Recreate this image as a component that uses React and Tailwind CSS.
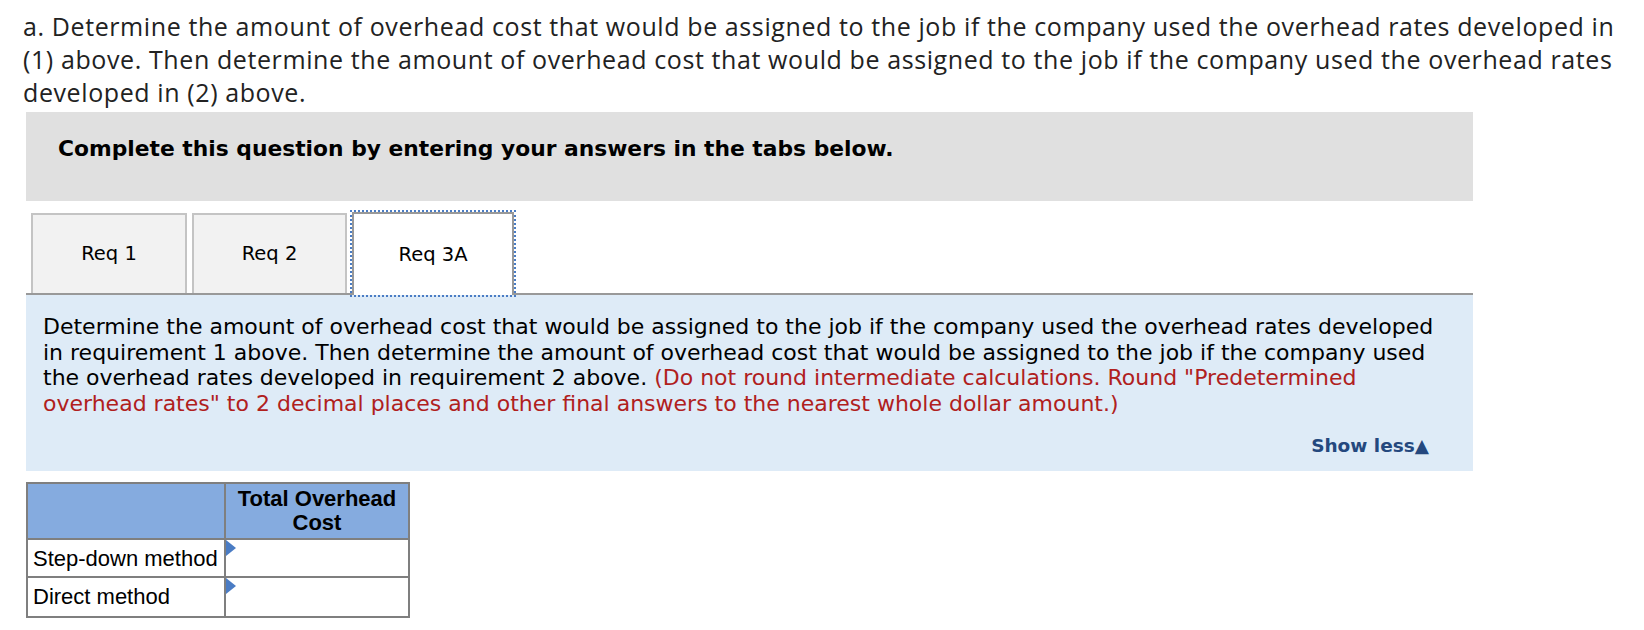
import React from "react";

export default function App() {
  const verdana = { fontFamily: '"DejaVu Sans", Verdana, sans-serif' };
  return (
    <div className="w-[1644px] h-[630px] bg-white overflow-hidden pt-[10px]">
      <p
        className="pl-[23px] pr-[20px] text-[25px] leading-[33px] tracking-[0.6px] text-[#222]"
        style={{ fontFamily: '"Open Sans", Lato, sans-serif' }}
      >
        a. Determine the amount of overhead cost that would be assigned to the job if the company used the overhead rates developed in (1) above. Then determine the amount of overhead cost that would be assigned to the job if the company used the overhead rates developed in (2) above.
      </p>

      <div className="ml-[26px] w-[1447px] mt-[3px]" style={verdana}>
        <div className="h-[89px] bg-[#e0e0e0] pl-[32px] pt-[24px]">
          <p className="text-[21.8px] font-bold text-black leading-[26px]">
            Complete this question by entering your answers in the tabs below.
          </p>
        </div>

        <div className="mt-[12px] flex items-end border-b-2 border-[#999] h-[82px] pl-[5px]">
          <div className="w-[156px] h-[80px] bg-[#f2f2f2] border-2 border-b-0 border-[#c4c4c4] flex items-center justify-center text-[19.5px] text-black">
            Req 1
          </div>
          <div className="ml-[5px] w-[155px] h-[80px] bg-[#f2f2f2] border-2 border-b-0 border-[#c4c4c4] flex items-center justify-center text-[19.5px] text-black">
            Req 2
          </div>
          <div className="ml-[5px] w-[162px] h-[83px] -mb-[2px] bg-white border-2 border-b-0 border-[#999] outline-2 outline-dotted outline-[#4a7cc4] flex items-center justify-center text-[19.5px] text-black">
            Req 3A
          </div>
        </div>

        <div className="bg-[#deebf7] h-[176px] pl-[17px] pr-[23px] pt-[19px]">
          <p className="text-[22px] leading-[25.5px] text-black">
            Determine the amount of overhead cost that would be assigned to the job if the company used the overhead rates developed in requirement 1 above. Then determine the amount of overhead cost that would be assigned to the job if the company used the overhead rates developed in requirement 2 above.{" "}
            <span className="text-[#b0201d]">
              (Do not round intermediate calculations. Round "Predetermined overhead rates" to 2 decimal places and other final answers to the nearest whole dollar amount.)
            </span>
          </p>
          <div className="flex justify-end pr-[21px] mt-[18px]">
            <span className="text-[18.5px] font-bold text-[#24487e] leading-[24px]">
              Show less▲
            </span>
          </div>
        </div>

        <table
          className="mt-[11px] border-collapse border-2 border-[#7f7f7f] text-[22px] text-black"
          style={{ fontFamily: '"Liberation Sans", Arial, sans-serif' }}
        >
          <tbody>
            <tr className="bg-[#85abdf]">
              <td className="w-[198px] h-[56px] border-2 border-[#7f7f7f]"></td>
              <td className="w-[184px] h-[56px] border-2 border-[#7f7f7f] text-center font-bold leading-[24px] px-1">
                Total Overhead
                <br />
                Cost
              </td>
            </tr>
            <tr>
              <td className="h-[38px] border-2 border-[#7f7f7f] pl-[5px] pr-[3px] pt-[2px] leading-[24px] whitespace-nowrap">
                Step-down method
              </td>
              <td className="relative h-[38px] border-2 border-[#7f7f7f] bg-white">
                <span className="absolute left-0 top-0 w-0 h-0 border-y-[8px] border-y-transparent border-l-[10px] border-l-[#4a7cc4]"></span>
              </td>
            </tr>
            <tr>
              <td className="h-[40px] border-2 border-[#7f7f7f] pl-[5px] leading-[24px] whitespace-nowrap">
                Direct method
              </td>
              <td className="relative h-[40px] border-2 border-[#7f7f7f] bg-white">
                <span className="absolute left-0 top-0 w-0 h-0 border-y-[8px] border-y-transparent border-l-[10px] border-l-[#4a7cc4]"></span>
              </td>
            </tr>
          </tbody>
        </table>
      </div>
    </div>
  );
}
